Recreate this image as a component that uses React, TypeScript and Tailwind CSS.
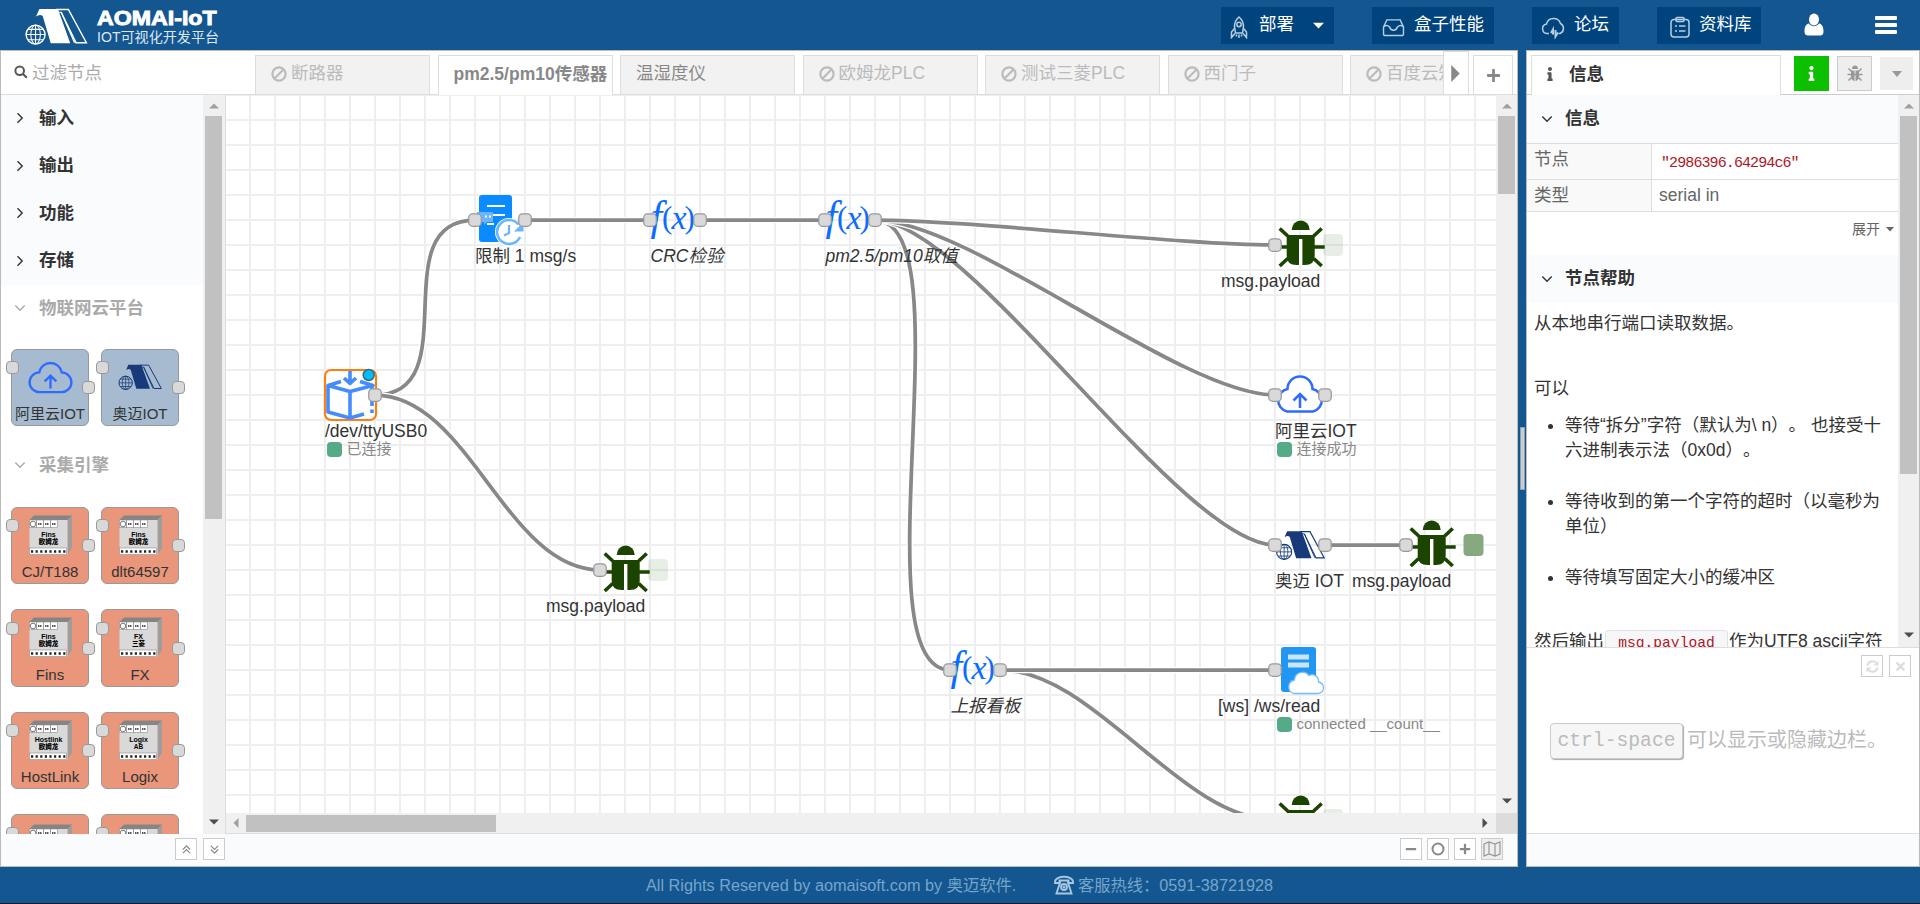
import React from "react";
import { FaBug, FaInfo, FaPlus, FaMinus, FaTimes } from "react-icons/fa";

/* ---------- small drawings ---------- */

function Mark({ color, className }: { color: string; className?: string }) {
  return (
    <svg viewBox="0 0 132 80" className={className} fill="none" stroke={color}>
      <path d="M24 18 L31 2 H70 L96 74 H55 L38 17 Q32 12 24 18Z" fill={color} stroke="none" />
      <path d="M66 3 H92 L130 73 H108 L77 9" strokeWidth="3" />
      <path d="M71 9 H77 L105 73" strokeWidth="2.5" />
      <circle cx="23" cy="56" r="20" strokeWidth="3" />
      <ellipse cx="23" cy="56" rx="10" ry="20" strokeWidth="2.2" />
      <path d="M23 36V76M3 56H43M7 45H39M7 67H39" strokeWidth="2.2" />
    </svg>
  );
}

function CloudUp({ className }: { className?: string }) {
  return (
    <svg viewBox="0 0 50 40" className={className} fill="none" stroke="#2f6bff" strokeWidth="2.6">
      <path d="M12.5 16 A12.7 12.7 0 0 1 37.5 16 A11 11 0 0 1 37 38 H13 A11 11 0 0 1 12.5 16Z" />
      <path d="M25 34V19.500M18.500 26L25 19.500L31.500 26" />
    </svg>
  );
}

function Plc({ top, bottom, className }: { top: string; bottom: string; className?: string }) {
  return (
    <svg viewBox="0 0 43 40" className={className} fontFamily="'Liberation Sans','Noto Sans CJK SC',sans-serif" fontWeight="900">
      <path d="M0.500 5 L5 0.500 H43 L38.500 5Z" fill="#858585" />
      <path d="M38.500 5 L43 0.500 V33 L38.500 39.500Z" fill="#9d9d9d" />
      <rect x="0.500" y="5" width="38" height="34.500" fill="#d9d9d9" />
      <rect x="0.500" y="5" width="28" height="7.500" fill="#fff" stroke="#8d8d8d" strokeWidth="0.600" />
      <circle cx="4" cy="9" r="2.800" fill="none" stroke="#555" strokeWidth="0.800" />
      <path d="M7.500 5V12.500M14.500 5V12.500M21.500 5V12.500" stroke="#777" strokeWidth="0.700" />
      <path d="M9 9h4M16 9h4M23 9h4" stroke="#222" strokeWidth="1.600" strokeDasharray="1.300 0.500" />
      <rect x="0.500" y="33" width="37" height="6.500" fill="#fff" stroke="#8d8d8d" strokeWidth="0.600" />
      <path d="M2 36.500H37" stroke="#222" strokeWidth="2.600" strokeDasharray="2.200 2.400" />
      {top && <text x="19.500" y="21.500" fontSize="7" textAnchor="middle" fill="#000">{top}</text>}
      {bottom && <text x="19.500" y="28.500" fontSize="6.500" textAnchor="middle" fill="#000">{bottom}</text>}
    </svg>
  );
}

function Ban() {
  return (
    <svg viewBox="0 0 16 16" className="mr-1 h-4 w-4 shrink-0" fill="none" stroke="currentColor" strokeWidth="2.200">
      <circle cx="8" cy="8" r="6.600" />
      <path d="M3.500 12.500L12.500 3.500" />
    </svg>
  );
}

function Angle({ open, color }: { open?: boolean; color: string }) {
  return (
    <svg viewBox="0 0 12 12" className="mt-px h-3 w-3 shrink-0" fill="none" stroke={color} strokeWidth="1.400">
      <path d={open ? "M1.300 3.500L6 8.200L10.700 3.500" : "M3.500 1.300L8.200 6L3.500 10.700"} />
    </svg>
  );
}

function Tri({ dir, color }: { dir: "up" | "down" | "left" | "right"; color: string }) {
  const d = {
    up: "M0 7.500L5 2.500L10 7.500Z",
    down: "M0 2.500L5 7.500L10 2.500Z",
    left: "M7.500 0L2.500 5L7.500 10Z",
    right: "M2.500 0L7.500 5L2.500 10Z",
  }[dir];
  return (
    <svg viewBox="0 0 10 10" className="h-[10px] w-[10px] shrink-0" fill={color}>
      <path d={d} />
    </svg>
  );
}

function VScroll({ thumb, className }: { thumb: string; className: string }) {
  return (
    <div className={`flex shrink-0 flex-col items-center bg-[#f0f0f0] ${className}`}>
      <div className="flex h-[21px] shrink-0 items-center pt-px"><Tri dir="up" color="#a0a0a0" /></div>
      <div className={`w-[17px] shrink-0 bg-[#c1c1c1] ${thumb}`} />
      <div className="flex-1" />
      <div className="flex h-[24px] shrink-0 items-center"><Tri dir="down" color="#4d4d4d" /></div>
    </div>
  );
}

/* ---------- header ---------- */

function HeaderButton({ icon, label, caret, className }: { icon: React.ReactNode; label: string; caret?: boolean; className: string }) {
  return (
    <div className={`flex h-[37px] items-center bg-[#00447e] text-[17.5px] leading-none text-white ${className}`}>
      {icon}
      <span className="pb-px">{label}</span>
      {caret && (
        <svg viewBox="0 0 12 7" className="ml-[19px] h-[7px] w-[11px]" fill="#fff"><path d="M0 0.500H12L6 6.800Z" /></svg>
      )}
    </div>
  );
}

function Header() {
  const s = { fill: "none", stroke: "#b9cde0", strokeWidth: 1.5 };
  return (
    <header className="flex h-[50px] shrink-0 items-start pl-[24px] pt-[7px]">
      <Mark color="#ffffff" className="mt-px h-[38px] w-[64px]" />
      <div className="ml-[9px] w-[1124px] text-white">
        <div className="whitespace-nowrap text-[20.500px] font-black leading-[22px] [-webkit-text-stroke:0.900px_white]">
          <span className="inline-block origin-left scale-x-[1.13]">AOMAI-IoT</span>
        </div>
        <div className="-mt-[2px] text-[14.100px] leading-[20px] text-[#dbe7f2]">IOT可视化开发平台</div>
      </div>
      <HeaderButton
        className="w-[113px] pl-[9px]"
        label="部署"
        caret
        icon={
          <svg viewBox="0 0 18 23" className="mr-[11px] mt-[3px] h-[23px] w-[18px]" {...s}>
            <path d="M9 1C5.500 4 4.500 7 4.500 10.500L5.500 17H12.500L13.500 10.500C13.500 7 12.500 4 9 1Z" />
            <circle cx="9" cy="8.500" r="2.200" />
            <path d="M4.500 12.500L1.500 16V21.500L5 17.500M13.500 12.500L16.500 16V21.500L13 17.500M6.500 18.500V20.500M9 18.500V22M11.500 18.500V20.500" />
          </svg>
        }
      />
      <HeaderButton
        className="ml-[38px] w-[122px] pl-[10px]"
        label="盒子性能"
        icon={
          <svg viewBox="0 0 24 20" className="mr-[9px] mt-[3px] h-[19px] w-[23px]" {...s}>
            <path d="M1.500 9.500L5 2H19L22.500 9.500V16.500Q22.500 18.500 20.500 18.500H3.500Q1.500 18.500 1.500 16.500ZM1.500 9.500Q4.500 6.500 8 9.500C9 14 15 14 16 9.500Q19.500 6.500 22.500 9.500" />
          </svg>
        }
      />
      <HeaderButton
        className="ml-[38px] w-[87px] pl-[9px]"
        label="论坛"
        icon={
          <svg viewBox="0 0 25 23" className="mr-[8px] mt-[3px] h-[23px] w-[25px]" {...s}>
            <path d="M8 17.500H6A4.800 4.800 0 0 1 5.500 8A7.300 7.300 0 0 1 19.500 7.500A5.500 5.500 0 0 1 19 17.500H17.500" />
            <path d="M10 17L12 13.500V18.500M14.500 14V20.500L17 16.500" strokeWidth="2" />
          </svg>
        }
      />
      <HeaderButton
        className="ml-[38px] w-[104px] pl-[12px]"
        label="资料库"
        icon={
          <svg viewBox="0 0 22 22" className="mr-[8px] mt-[3px] h-[22px] w-[22px]" {...s}>
            <rect x="2" y="3.500" width="18" height="17.500" rx="3" />
            <rect x="7" y="1.500" width="8" height="4" rx="1" />
            <path d="M6 10H8M10 10H16.500M6 15H8M10 15H16.500" />
          </svg>
        }
      />
      <svg viewBox="0 0 20 23" className="ml-[43px] mt-[6px] h-[23px] w-[20px]" fill="#fff">
        <ellipse cx="10" cy="6.500" rx="5" ry="6" />
        <path d="M5 10.500C1.500 11 0.500 14.500 0.500 18.500Q0.500 22.500 4 22.500H16Q19.500 22.500 19.500 18.500C19.500 14.500 18.500 11 15 10.500C12 14 8 14 5 10.500Z" />
      </svg>
      <svg viewBox="0 0 22 20" className="ml-[51px] mt-[8px] h-[20px] w-[22px]" fill="#fff">
        <rect y="1" width="22" height="4" rx="1" /><rect y="8" width="22" height="4" rx="1" /><rect y="15" width="22" height="4" rx="1" />
      </svg>
    </header>
  );
}

/* ---------- tabs ---------- */

function Tabs() {
  const tab = "h-[39px] w-[175px] shrink-0 border border-b-0 border-[#ddd] flex items-center pl-[15px] pb-[3px] text-[17.5px] whitespace-nowrap mr-[7.5px]";
  const off = `${tab} bg-[#f2f2f2] text-[#bbb]`;
  return (
    <div className="flex h-[44px] shrink-0 items-end border-b border-[#ddd]">
      <div className="flex h-full w-[254px] shrink-0 items-center pl-[13px] pt-px text-[17.5px] text-[#aaa]">
        <svg viewBox="0 0 14 14" className="mb-[3px] mr-[4px] h-[14px] w-[14px]" fill="none" stroke="#555" strokeWidth="2">
          <circle cx="5.700" cy="5.700" r="4.300" /><path d="M9 9L12.800 12.800" />
        </svg>
        过滤节点
      </div>
      <div className={off}><Ban />断路器</div>
      <div className={`${tab} -mb-px h-[40px] bg-white font-bold text-[#888]`}>pm2.5/pm10传感器</div>
      <div className={`${tab} bg-[#f2f2f2] text-[#888]`}>温湿度仪</div>
      <div className={off}><Ban />欧姆龙PLC</div>
      <div className={off}><Ban />测试三菱PLC</div>
      <div className={off}><Ban />西门子</div>
      <div className="flex h-[39px] w-[93px] shrink-0 items-center overflow-hidden whitespace-nowrap border border-b-0 border-r-0 border-[#ddd] bg-[#f2f2f2] pb-[3px] pl-[15px] text-[17.5px] text-[#bbb]">
        <Ban />百度云知
      </div>
      <div className="flex h-[43px] w-[26px] shrink-0 items-center border-x border-t border-[#ddd] bg-white pl-[6px]">
        <svg viewBox="0 0 10 18" className="h-[17px] w-[10px]" fill="#888"><path d="M1 0L10 9L1 18Z" /></svg>
      </div>
      <div className="ml-[4px] flex h-[39px] w-[40px] shrink-0 items-center justify-center border border-b-0 border-[#ddd] text-[#888]">
        <FaPlus size={15} />
      </div>
    </div>
  );
}

/* ---------- palette ---------- */

function PaletteNode({ label, bg, gap, children }: { label: string; bg: string; gap: string; children: React.ReactNode }) {
  const port = "absolute h-[13px] w-[13px] rounded-[4px] border border-[#999] bg-[#d9d9d9]";
  return (
    <div className={`relative flex h-[77.5px] flex-col items-center rounded-[6px] border border-[#999] ${bg}`}>
      <div className="flex h-[53px] w-full items-end justify-center pb-[4px]">{children}</div>
      {label && <div className={`whitespace-nowrap text-[15px] leading-[22px] text-[#333] ${gap}`}>{label}</div>}
      <div className={`${port} -left-[6px] top-[11.500px]`} />
      <div className={`${port} -right-[7px] top-[31.500px]`} />
    </div>
  );
}

function Palette() {
  const row = "flex h-[47.5px] shrink-0 items-center gap-[13px] pl-[13px] pb-[2px] text-[17.5px] font-bold";
  const items = [
    ["CJ/T188", "Fins", "欧姆龙"], ["dlt64597", "Fins", "欧姆龙"],
    ["Fins", "Fins", "欧姆龙"], ["FX", "FX", "三菱"],
    ["HostLink", "Hostlink", "欧姆龙"], ["Logix", "Logix", "AB"],
    ["", "", ""], ["", "", ""],
  ];
  return (
    <div className="flex w-[202px] shrink-0 flex-col overflow-hidden">
      {["输入", "输出", "功能", "存储"].map((c) => (
        <div key={c} className={`${row} bg-[#fafbfd] text-[#333]`}><Angle color="#333" />{c}</div>
      ))}
      <div className={`${row} text-[#aaa]`}><Angle open color="#aaa" />物联网云平台</div>
      <div className="grid shrink-0 grid-cols-[78px_78px] gap-x-3 py-[16px] pl-[10px]">
        <PaletteNode label="阿里云IOT" bg="bg-[#a6bbcf]" gap="mt-[1.500px]"><CloudUp className="mb-[4px] h-[36px] w-[45px]" /></PaletteNode>
        <PaletteNode label="奥迈IOT" bg="bg-[#a6bbcf]" gap="mt-[1.500px]"><Mark color="#173a7a" className="mb-[7px] h-[27px] w-[44px]" /></PaletteNode>
      </div>
      <div className={`${row} text-[#aaa]`}><Angle open color="#aaa" />采集引擎</div>
      <div className="grid shrink-0 grid-cols-[78px_78px] gap-x-3 gap-y-[25px] pb-4 pl-[10px] pt-[17px]">
        {items.map(([label, t, b], i) => (
          <PaletteNode key={i} label={label} bg="bg-[#e9967a]" gap="mt-[2.500px]"><Plc top={t} bottom={b} className="h-[40px] w-[43px]" /></PaletteNode>
        ))}
      </div>
    </div>
  );
}

/* ---------- flow canvas ---------- */

/* Coordinates are in the flow's own space, whose origin is the canvas corner. */
function wire(x1: number, y1: number, x2: number, y2: number) {
  const d = Math.hypot(x2 - x1, y2 - y1);
  const k = d < 125 ? (0.75 * d) / 125 : 0.75;
  return `M${x1} ${y1}C${x1 + 125 * k} ${y1} ${x2 - 125 * k} ${y2} ${x2} ${y2}`;
}

const wires: [number, number, number, number][] = [
  [150, 300, 250, 125],
  [150, 300, 375, 475],
  [300, 125, 425, 125],
  [475, 125, 600, 125],
  [650, 125, 725, 575],
  [650, 125, 1050, 450],
  [650, 125, 1050, 300],
  [650, 125, 1050, 150],
  [1100, 450, 1181, 450],
  [775, 575, 1050, 725],
  [775, 575, 1050, 575],
];

const ports: [number, number][] = [
  [250, 125], [300, 125], [425, 125], [475, 125], [600, 125], [650, 125],
  [1050, 150], [150, 300], [1050, 300], [1100, 300], [1050, 450], [1100, 450],
  [1181, 450], [375, 475], [725, 575], [775, 575], [1050, 575], [1050, 725],
];

function BugNode({ x, y, on }: { x: number; y: number; on?: boolean }) {
  return (
    <g transform={`translate(${x} ${y})`}>
      <rect x={on ? 57.5 : 48} y="-11" width="20" height="22" rx="4" fill="#87a980" opacity={on ? 1 : 0.2} />
      <g transform="translate(0.700 0)" fill="#1b4400" stroke="#1b4400">
        <path d="M16 -15A9 9.500 0 0 1 34 -15Z" stroke="none" />
        <path d="M11 -10H39V11Q39 20 29 20H21Q11 20 11 11Z" stroke="none" />
        <path d="M4 -16.500L12 -9M46 -16.500L38 -9M3 2H49M4 21L12 13.500M46 21L38 13.500" strokeWidth="3.600" fill="none" />
        <path d="M25 -6V20" stroke="#fff" strokeWidth="3.400" />
      </g>
    </g>
  );
}

function Fx({ x, y }: { x: number; y: number }) {
  return (
    <g fill="#0b6cff" fontFamily="'Liberation Serif',serif" fontStyle="italic">
      <text x={x + 4.5} y={y + 9.5} fontSize="42">f</text>
      <text x={x + 16} y={y + 8} fontSize="31" fontStyle="normal">(</text>
      <text x={x + 25.5} y={y + 9} fontSize="34">x</text>
      <text x={x + 38.5} y={y + 8} fontSize="31" fontStyle="normal">)</text>
    </g>
  );
}

function Status({ x, y, text }: { x: number; y: number; text: string }) {
  return (
    <g>
      <rect x={x} y={y} width="15" height="15" rx="4" fill="#5a8" />
      <text x={x + 19.5} y={y + 11.800} fontSize="15" fill="#888">{text}</text>
    </g>
  );
}

function Canvas() {
  return (
    <svg width="1270" height="718" viewBox="1 0 1270 718" className="block shrink-0" fontFamily="'Liberation Sans','Noto Sans CJK SC',sans-serif">
      <g stroke="#eee" strokeWidth="2">
        {Array.from({ length: 51 }, (_, i) => <path key={`v${i}`} d={`M${i * 25} 0V718`} />)}
        {Array.from({ length: 29 }, (_, i) => <path key={`h${i}`} d={`M0 ${i * 25}H1271`} />)}
      </g>
      <g fill="none">
        {wires.map((w, i) => (
          <g key={i}>
            <path d={wire(...w)} stroke="#fff" strokeWidth="6.250" />
            <path d={wire(...w)} stroke="#888" strokeWidth="3.750" />
          </g>
        ))}
      </g>

      {/* serial in */}
      <rect x="100" y="275" width="51" height="50" rx="6" fill="#fff" stroke="#ff7f0e" strokeWidth="2.200" />
      <g fill="none" stroke="#448dff" strokeWidth="3.600" strokeLinejoin="round">
        <path d="M125 276V288M119 283L125 288.500L131 283M116 286.500L103 290.500V317L125 323L139 319M103 290.500L125 296.500V322M135 286.500L148 290.500L125 296.500M147 290V311M147 314.500V318" />
      </g>
      <circle cx="143.700" cy="280" r="5.500" fill="#00bcff" stroke="#356b80" strokeWidth="1.500" />

      {/* rate limit */}
      <rect x="254" y="100" width="33" height="47" rx="3" fill="#0a8bff" />
      <path d="M262 111H280M268 120H280M262 129H269" stroke="#fff" strokeWidth="2" />
      <path d="M252 117H268V127H262L259 130V127H252Z" fill="#6ab5ff" />
      <path d="M260 121.500h2M264 121.500h2" stroke="#fff" strokeWidth="2" />
      <circle cx="284" cy="137" r="14" fill="#fff" />
      <path d="M295 142A12 12 0 1 1 293.500 129.500" fill="none" stroke="#6ab5ff" strokeWidth="2.600" />
      <path d="M284 130V138L279 140.500" fill="none" stroke="#6ab5ff" strokeWidth="2.200" />
      <path d="M298.500 127V136.500H289Z" fill="#6ab5ff" />

      <Fx x={421} y={125} />
      <Fx x={596} y={125} />
      <Fx x={721} y={575} />

      <g transform="translate(1050 279)" fill="none" stroke="#2f6bff" strokeWidth="2.500">
        <path d="M12.500 15A12.500 12.500 0 0 1 37.500 15A11.500 11.500 0 0 1 38 37.500H12A11.500 11.500 0 0 1 12.500 15Z" fill="#fff" />
        <path d="M25 34V20M18.500 26.500L25 20L31.500 26.500" />
      </g>

      <g transform="translate(1050.500 435.500) scale(0.375)" fill="none" stroke="#173a7a">
        <path d="M24 18L31 2H70L96 74H55L38 17Q32 12 24 18Z" fill="#173a7a" stroke="none" />
        <path d="M66 3H92L130 73H108L77 9" strokeWidth="3" />
        <path d="M71 9H77L105 73" strokeWidth="2.500" />
        <circle cx="23" cy="57" r="20" strokeWidth="3" fill="#fff" />
        <ellipse cx="23" cy="57" rx="10" ry="20" strokeWidth="2.200" />
        <path d="M23 37V77M3 57H43M7 46H39M7 68H39" strokeWidth="2.200" />
      </g>

      {/* websocket in */}
      <rect x="1056" y="552" width="35" height="45" rx="3" fill="#2196f3" />
      <path d="M1063 562H1084M1063 570H1084" stroke="#cbe5fc" strokeWidth="5" />
      <path d="M1068.500 598.500H1092A5.500 5.500 0 0 0 1093.500 587A6.500 6.500 0 0 0 1084 580.500A8 8 0 0 0 1069.500 585A7 7 0 0 0 1068.500 598.500Z" fill="#fff" stroke="#74bdf7" strokeWidth="1.300" />

      <BugNode x={1050} y={150} />
      <BugNode x={375} y={475} />
      <BugNode x={1181} y={450} on />
      <BugNode x={1050} y={725} />

      {ports.map(([x, y]) => (
        <rect key={`${x}-${y}`} x={x - 6.25} y={y - 6.25} width="12.500" height="12.500" rx="3.750" fill="#d9d9d9" stroke="#999" strokeWidth="1.250" />
      ))}

      <g fontSize="17.500" fill="#333">
        <text x="250" y="167">限制 1 msg/s</text>
        <text x="425.500" y="167" fontStyle="italic">CRC检验</text>
        <text x="600.500" y="167" fontStyle="italic">pm2.5/pm10取值</text>
        <text x="996" y="192">msg.payload</text>
        <text x="100" y="342">/dev/ttyUSB0</text>
        <text x="1050" y="342">阿里云IOT</text>
        <text x="321" y="517">msg.payload</text>
        <text x="1050" y="492">奥迈 IOT</text>
        <text x="1127" y="492">msg.payload</text>
        <text x="725.500" y="617" fontStyle="italic">上报看板</text>
        <text x="993" y="617">[ws] /ws/read</text>
      </g>
      <Status x={102} y={347} text="已连接" />
      <Status x={1052} y={347} text="连接成功" />
      <Status x={1052} y={622} text="connected __count__" />
    </svg>
  );
}

/* ---------- workspace panel ---------- */

function SquareButton({ children, className = "bg-white" }: { children: React.ReactNode; className?: string }) {
  return (
    <div className={`flex h-[22px] w-[22px] items-center justify-center border border-[#ccc] text-[#888] ${className}`}>{children}</div>
  );
}

function DoubleAngle({ down }: { down?: boolean }) {
  return (
    <svg viewBox="0 0 10 10" className={`h-[9px] w-[9px] ${down ? "rotate-180" : ""}`} fill="none" stroke="#888" strokeWidth="1.300">
      <path d="M1 5L5 1L9 5M1 9L5 5L9 9" />
    </svg>
  );
}

function Workspace() {
  return (
    <section className="flex w-[1518px] shrink-0 flex-col border border-[#bbb] bg-white">
      <Tabs />
      <div className="flex h-[739px] shrink-0">
        <Palette />
        <VScroll className="w-[22px] pr-px" thumb="h-[403px]" />
        <div className="flex w-[1292px] shrink-0 flex-col border-b border-l border-[#ddd]">
          <div className="flex h-[718px]">
            <Canvas />
            <VScroll className="w-[21px]" thumb="h-[78px]" />
          </div>
          <div className="flex h-[20px] items-center bg-[#f0f0f0]">
            <div className="flex w-[20px] justify-center"><Tri dir="left" color="#a0a0a0" /></div>
            <div className="h-[17px] w-[250px] bg-[#c1c1c1]" />
            <div className="flex flex-1 justify-end pr-[6px]"><Tri dir="right" color="#4d4d4d" /></div>
            <div className="h-full w-[21px] bg-[#dcdcdc]" />
          </div>
        </div>
      </div>
      <div className="flex flex-1 items-start bg-[#fafbfd] pl-[174px] pr-[14px] pt-[4px]">
        <SquareButton><DoubleAngle /></SquareButton>
        <div className="w-[6px]" />
        <SquareButton><DoubleAngle down /></SquareButton>
        <div className="flex flex-1 justify-end gap-[5px]">
          <SquareButton><FaMinus size={12} /></SquareButton>
          <SquareButton>
            <svg viewBox="0 0 14 14" className="h-[14px] w-[14px]" fill="none" stroke="#888" strokeWidth="2"><circle cx="7" cy="7" r="5.500" /></svg>
          </SquareButton>
          <SquareButton><FaPlus size={12} /></SquareButton>
          <SquareButton className="bg-[#eee]">
            <svg viewBox="0 0 18 16" className="h-[16px] w-[18px] shrink-0" fill="none" stroke="#999" strokeWidth="1.200">
              <path d="M1 3L6 1L12 3L17 1V13L12 15L6 13L1 15ZM6 1V13M12 3V15" />
            </svg>
          </SquareButton>
        </div>
      </div>
    </section>
  );
}

/* ---------- info sidebar ---------- */

function Section({ title }: { title: string }) {
  return (
    <div className="flex h-[48px] shrink-0 items-center gap-[12px] bg-[#fafbfd] pb-[2px] pl-[14px] text-[17.5px] font-bold text-[#333]">
      <Angle open color="#333" />{title}
    </div>
  );
}

function Sidebar() {
  return (
    <section className="flex w-[394px] shrink-0 flex-col border border-[#bbb] bg-white">
      <div className="flex h-[44px] shrink-0 items-end border-b border-[#ccc]">
        <div className="-mb-px ml-[4px] flex h-[40px] w-[250px] items-center border border-b-0 border-[#ddd] bg-white pb-[3px] pl-[11px] text-[17.5px] font-bold text-[#333]">
          <FaInfo size={14} className="mr-[12px] text-[#555]" />信息
        </div>
        <div className="mb-[3px] ml-[13px] flex h-[35px] w-[35px] items-center justify-center bg-[#0cc000] text-white"><FaInfo size={15} /></div>
        <div className="mb-[3px] ml-[8px] flex h-[35px] w-[35px] items-center justify-center border border-[#ccc] bg-[#eee] text-[#999]">
          <svg viewBox="0 0 16 17" className="h-[17px] w-[16px]" fill="none" stroke="#999" strokeWidth="1.500">
            <path d="M5 4A3 3.500 0 0 1 11 4Z" fill="#999" stroke="none" />
            <path d="M4 5.500H7.500V16Q4 15.500 4 11ZM12 5.500H8.500V16Q12 15.500 12 11Z" fill="#999" stroke="none" />
            <path d="M1.500 3.500L4.500 6.500M14.500 3.500L11.500 6.500M0.500 9.500H15.500M1.500 15.500L4.500 12.500M14.500 15.500L11.500 12.500" />
          </svg>
        </div>
        <div className="mb-[4px] ml-[8px] flex h-[33px] w-[33px] items-center justify-center bg-[#eee]">
          <svg viewBox="0 0 10 6" className="h-[6px] w-[10px]" fill="#999"><path d="M0 0H10L5 6Z" /></svg>
        </div>
      </div>
      <div className="flex h-[552px] shrink-0 overflow-hidden">
        <div className="flex w-[371px] shrink-0 flex-col text-[17.5px] text-[#333]">
          <Section title="信息" />
          <div className="grid shrink-0 grid-cols-[125px_246px] border-t border-[#ddd] text-[#666]">
            <div className="flex h-[36px] items-start border-b border-r border-[#ddd] bg-[#f9f9f9] pl-[7px] pt-[2px] leading-[26px]">节点</div>
            <div className="flex h-[36px] items-center border-b border-[#ddd] pl-[9px] pt-[5px] font-['Liberation_Mono'] text-[15px] tracking-[-0.900px] text-[#ad1625]">"2986396.64294c6"</div>
            <div className="flex h-[32px] items-center border-b border-r border-[#ddd] bg-[#f9f9f9] pl-[7px]">类型</div>
            <div className="flex h-[32px] items-center border-b border-[#ddd] pl-[7px]">serial in</div>
          </div>
          <div className="flex h-[43px] shrink-0 items-center justify-end gap-[6px] pb-[9px] pr-[4px] text-[14px] text-[#666]">
            展开
            <svg viewBox="0 0 8 5" className="h-[5px] w-[8px]" fill="#666"><path d="M0 0H8L4 4.500Z" /></svg>
          </div>
          <Section title="节点帮助" />
          <div className="shrink-0 pl-[7px] pt-[8px] leading-[25px] [text-spacing-trim:space-all]">
            <p>从本地串行端口读取数据。</p>
            <p className="mt-[40px]">可以</p>
            <ul className="ml-[31px] mt-[12px] w-[330px] list-disc">
              <li>
                <div className="whitespace-nowrap">等待“拆分”字符（默认为\ n）。 也接受十</div>
                <div>六进制表示法（0x0d）。</div>
              </li>
              <li className="mt-[26px]">
                <div className="whitespace-nowrap">等待收到的第一个字符的超时（以毫秒为</div>
                <div>单位）</div>
              </li>
              <li className="mt-[26px]">等待填写固定大小的缓冲区</li>
            </ul>
            <p className="mt-[39px] flex whitespace-nowrap">
              然后输出
              <code className="mx-[1px] mt-px h-[26px] w-[123px] rounded-[3px] border border-[#e1e1e8] bg-[#f7f7f9] text-center font-['Liberation_Mono'] text-[14.6px] leading-[25px] text-[#ad1625]">msg.payload</code>
              作为UTF8 ascii字符
            </p>
          </div>
        </div>
        <VScroll className="w-[21px]" thumb="h-[358px]" />
      </div>
      <div className="flex h-[187px] shrink-0 flex-col border-y border-[#ddd]">
        <div className="flex justify-end gap-[6px] pr-[8px] pt-[7px]">
          <SquareButton>
            <svg viewBox="0 0 14 14" className="h-[13px] w-[13px] shrink-0" fill="none" stroke="#ddd" strokeWidth="2.200">
              <path d="M1.500 6A5.500 5.500 0 0 1 11 3.200M12.500 8A5.500 5.500 0 0 1 3 10.800" />
              <path d="M13.500 0.500V6H8ZM0.500 13.500V8H6Z" fill="#ddd" stroke="none" />
            </svg>
          </SquareButton>
          <SquareButton><FaTimes size={13} color="#ddd" /></SquareButton>
        </div>
        <div className="mt-[46px] flex items-center pl-[23px] text-[20px] text-[#bbb]">
          <kbd className="flex h-[36px] w-[133px] items-center justify-center rounded-[4px] border border-[#ccc] bg-[#f6f6f6] pt-[2px] font-['Liberation_Mono'] text-[19.700px] shadow-[1px_1px_1px_#aaa]">ctrl-space</kbd>
          <span className="ml-[4px] whitespace-nowrap pb-[2px]">可以显示或隐藏边栏。</span>
        </div>
      </div>
      <div className="flex-1 bg-[#fafbfd]" />
    </section>
  );
}

export default function App() {
  return (
    <div className="flex h-[904px] w-[1920px] flex-col overflow-hidden bg-[#14568f] font-['Liberation_Sans','Noto_Sans_CJK_SC',sans-serif]">
      <Header />
      <main className="flex h-[817px] shrink-0">
        <Workspace />
        <div className="flex w-[8px] shrink-0 items-start justify-center pt-[377px]">
          <div className="h-[63px] w-[5px] border border-[#8d9fb5] bg-[#ccc]" />
        </div>
        <Sidebar />
      </main>
      <footer className="flex h-[37px] shrink-0 items-center border-b border-[#0b1524] pl-[646px] text-[16.250px] text-[#76a5cc]">
        <span className="w-[408px] whitespace-nowrap">All Rights Reserved by aomaisoft.com by 奥迈软件.</span>
        <svg viewBox="0 0 20 20" className="mr-[4px] h-[20px] w-[20px]" fill="none" stroke="#a9c6e0" strokeWidth="1.900">
          <path d="M1 7C1 0 19 0 19 7V8H14.500V5.500H5.500V8H1Z" />
          <path d="M6.500 6L2.500 18.500H17.500L13.500 6" />
          <circle cx="10" cy="12" r="3" /><circle cx="10" cy="12" r="0.600" />
        </svg>
        <span className="whitespace-nowrap">客服热线：0591-38721928</span>
      </footer>
    </div>
  );
}
